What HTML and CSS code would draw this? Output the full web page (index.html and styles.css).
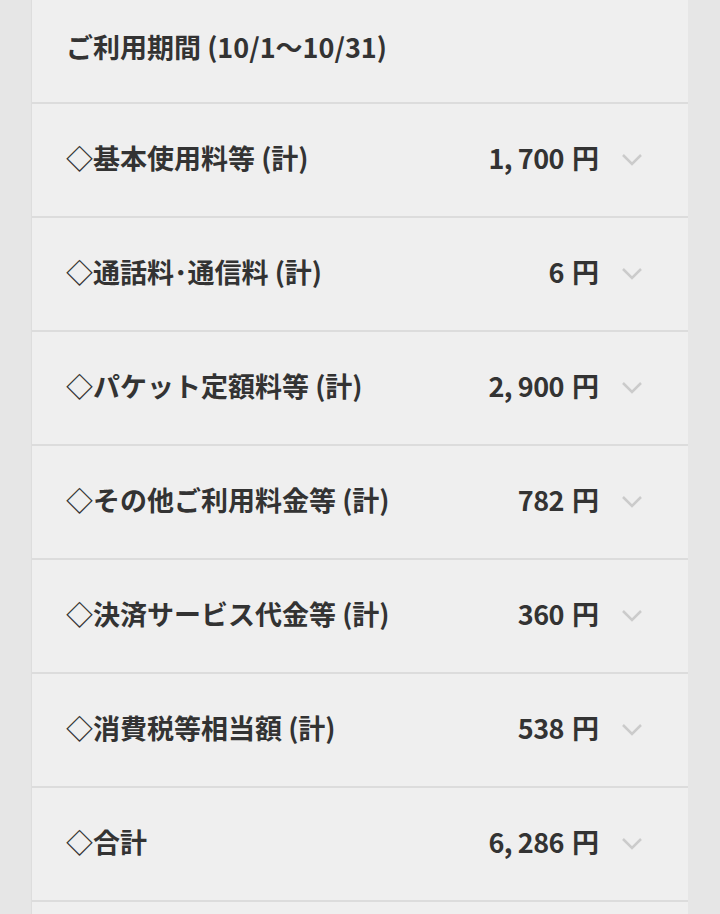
FILE: index.html
```html
<!DOCTYPE html>
<html lang="ja">
<head>
<meta charset="utf-8">
<link rel="stylesheet" href="styles.css">
</head>
<body>
<div class="card">
  <div class="head">ご利用期間 (10/1〜10/31)</div>
  <div class="row"><span class="label">◇基本使用料等 (計)</span><span class="amt">1, 700<span class="yen">円</span></span><svg class="chev" viewBox="0 0 20 12"><path d="M1 1 L10 10 L19 1"/></svg></div>
  <div class="row"><span class="label">◇通話料･通信料 (計)</span><span class="amt">6<span class="yen">円</span></span><svg class="chev" viewBox="0 0 20 12"><path d="M1 1 L10 10 L19 1"/></svg></div>
  <div class="row"><span class="label">◇パケット定額料等 (計)</span><span class="amt">2, 900<span class="yen">円</span></span><svg class="chev" viewBox="0 0 20 12"><path d="M1 1 L10 10 L19 1"/></svg></div>
  <div class="row"><span class="label">◇その他ご利用料金等 (計)</span><span class="amt">782<span class="yen">円</span></span><svg class="chev" viewBox="0 0 20 12"><path d="M1 1 L10 10 L19 1"/></svg></div>
  <div class="row"><span class="label">◇決済サービス代金等 (計)</span><span class="amt">360<span class="yen">円</span></span><svg class="chev" viewBox="0 0 20 12"><path d="M1 1 L10 10 L19 1"/></svg></div>
  <div class="row"><span class="label">◇消費税等相当額 (計)</span><span class="amt">538<span class="yen">円</span></span><svg class="chev" viewBox="0 0 20 12"><path d="M1 1 L10 10 L19 1"/></svg></div>
  <div class="row"><span class="label">◇合計</span><span class="amt">6, 286<span class="yen">円</span></span><svg class="chev" viewBox="0 0 20 12"><path d="M1 1 L10 10 L19 1"/></svg></div>
  <div class="row"></div>
</div>
</body>
</html>
```
FILE: styles.css
```css
html, body {
  margin: 0;
  padding: 0;
  background: #e6e6e6;
  height: 914px;
  overflow: hidden;
}
.card {
  margin-left: 32px;
  width: 656px;
  background: #efefef;
  box-shadow: -1px 0 1px rgba(0,0,0,0.04);
  font-family: "Noto Sans CJK JP", "Noto Sans", sans-serif;
  font-weight: 700;
  color: #333333;
  font-size: 27px;
}
.head {
  height: 92px;
  padding-left: 34px;
  padding-bottom: 10px;
  display: flex;
  align-items: center;
  border-bottom: 2px solid #dcdcdc;
}
.row {
  height: 107px;
  padding-bottom: 5px;
  display: flex;
  align-items: center;
  padding-left: 34px;
  padding-right: 46px;
  border-bottom: 2px solid #dcdcdc;
}
.label {
  flex: 1;
}
.amt {
  margin-right: 23px;
  letter-spacing: -0.5px;
}
.yen {
  margin-left: 8px;
  letter-spacing: 0;
}
.chev {
  width: 20px;
  height: 12px;
  fill: none;
  stroke: #cbcbcb;
  stroke-width: 2.5;
  margin-top: 4px;
}
```
